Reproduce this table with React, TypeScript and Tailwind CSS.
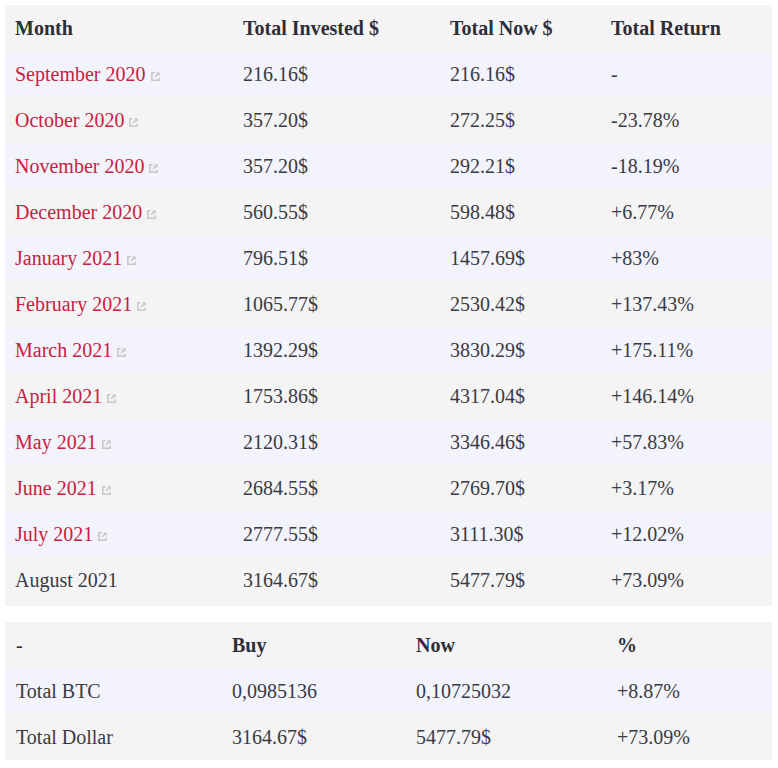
const ROWS: { month: string; link: boolean; invested: string; now: string; ret: string }[] = [
  { month: 'September 2020', link: true, invested: '216.16$', now: '216.16$', ret: '-' },
  { month: 'October 2020', link: true, invested: '357.20$', now: '272.25$', ret: '-23.78%' },
  { month: 'November 2020', link: true, invested: '357.20$', now: '292.21$', ret: '-18.19%' },
  { month: 'December 2020', link: true, invested: '560.55$', now: '598.48$', ret: '+6.77%' },
  { month: 'January 2021', link: true, invested: '796.51$', now: '1457.69$', ret: '+83%' },
  { month: 'February 2021', link: true, invested: '1065.77$', now: '2530.42$', ret: '+137.43%' },
  { month: 'March 2021', link: true, invested: '1392.29$', now: '3830.29$', ret: '+175.11%' },
  { month: 'April 2021', link: true, invested: '1753.86$', now: '4317.04$', ret: '+146.14%' },
  { month: 'May 2021', link: true, invested: '2120.31$', now: '3346.46$', ret: '+57.83%' },
  { month: 'June 2021', link: true, invested: '2684.55$', now: '2769.70$', ret: '+3.17%' },
  { month: 'July 2021', link: true, invested: '2777.55$', now: '3111.30$', ret: '+12.02%' },
  { month: 'August 2021', link: false, invested: '3164.67$', now: '5477.79$', ret: '+73.09%' },
];

const TOTALS = [
  { label: 'Total BTC', buy: '0,0985136', now: '0,10725032', pct: '+8.87%' },
  { label: 'Total Dollar', buy: '3164.67$', now: '5477.79$', pct: '+73.09%' },
];

function ExtIcon() {
  return (
    <svg viewBox="0 0 12 12" className="ml-[4px] inline-block h-[11px] w-[11px] align-[-1px]" aria-hidden>
      <path d="M5 2H2v8h8V7" fill="none" stroke="#c6c6c6" strokeWidth="1.6" />
      <path d="M6.5 1.5h4v4z" fill="#c6c6c6" />
      <path d="M10 2L5.5 6.5" stroke="#c6c6c6" strokeWidth="1.6" />
    </svg>
  );
}

const rowBg = (i: number) => (i % 2 === 0 ? 'bg-[#f3f3fb]' : 'bg-[#f4f4f4]');

export default function App() {
  return (
    <div className="min-h-[768px] w-[778px] bg-white px-[5px] pt-[5px] font-['Liberation_Serif',serif] text-[20px] text-[#3a3a44]">
      <table className="w-[767px] table-fixed border-collapse">
        <colgroup>
          <col className="w-[228px]" />
          <col className="w-[207px]" />
          <col className="w-[161px]" />
          <col className="w-[171px]" />
        </colgroup>
        <thead>
          <tr className="h-[46px] bg-[#f4f4f4] text-left text-[#2e2e38]">
            <th className="pl-[10px] font-bold">Month</th>
            <th className="pl-[10px] font-bold">Total Invested $</th>
            <th className="pl-[10px] font-bold">Total Now $</th>
            <th className="pl-[10px] font-bold">Total Return</th>
          </tr>
        </thead>
        <tbody>
          {ROWS.map((r, i) => {
            const last = i === ROWS.length - 1;
            const td = last ? 'pl-[10px] pb-[3px]' : 'pl-[10px]';
            return (
              <tr key={r.month} className={`${last ? 'h-[49px]' : 'h-[46px]'} ${rowBg(i)}`}>
                <td className={td}>
                  {r.link ? (
                    <a href="#" className="text-[#c8203f]">
                      {r.month}
                      <ExtIcon />
                    </a>
                  ) : (
                    r.month
                  )}
                </td>
                <td className={td}>{r.invested}</td>
                <td className={td}>{r.now}</td>
                <td className={td}>{r.ret}</td>
              </tr>
            );
          })}
        </tbody>
      </table>

      <table className="mt-[16px] w-[767px] table-fixed border-collapse">
        <colgroup>
          <col className="w-[217px]" />
          <col className="w-[184px]" />
          <col className="w-[201px]" />
          <col className="w-[165px]" />
        </colgroup>
        <thead>
          <tr className="h-[46px] bg-[#f4f4f4] text-left text-[#2e2e38]">
            <th className="pl-[11px] font-normal">-</th>
            <th className="pl-[10px] font-bold">Buy</th>
            <th className="pl-[10px] font-bold">Now</th>
            <th className="pl-[10px] font-bold">%</th>
          </tr>
        </thead>
        <tbody>
          {TOTALS.map((r, i) => (
            <tr key={r.label} className={`h-[46px] ${rowBg(i)}`}>
              <td className="pl-[11px]">{r.label}</td>
              <td className="pl-[10px]">{r.buy}</td>
              <td className="pl-[10px]">{r.now}</td>
              <td className="pl-[10px]">{r.pct}</td>
            </tr>
          ))}
        </tbody>
      </table>
    </div>
  );
}
